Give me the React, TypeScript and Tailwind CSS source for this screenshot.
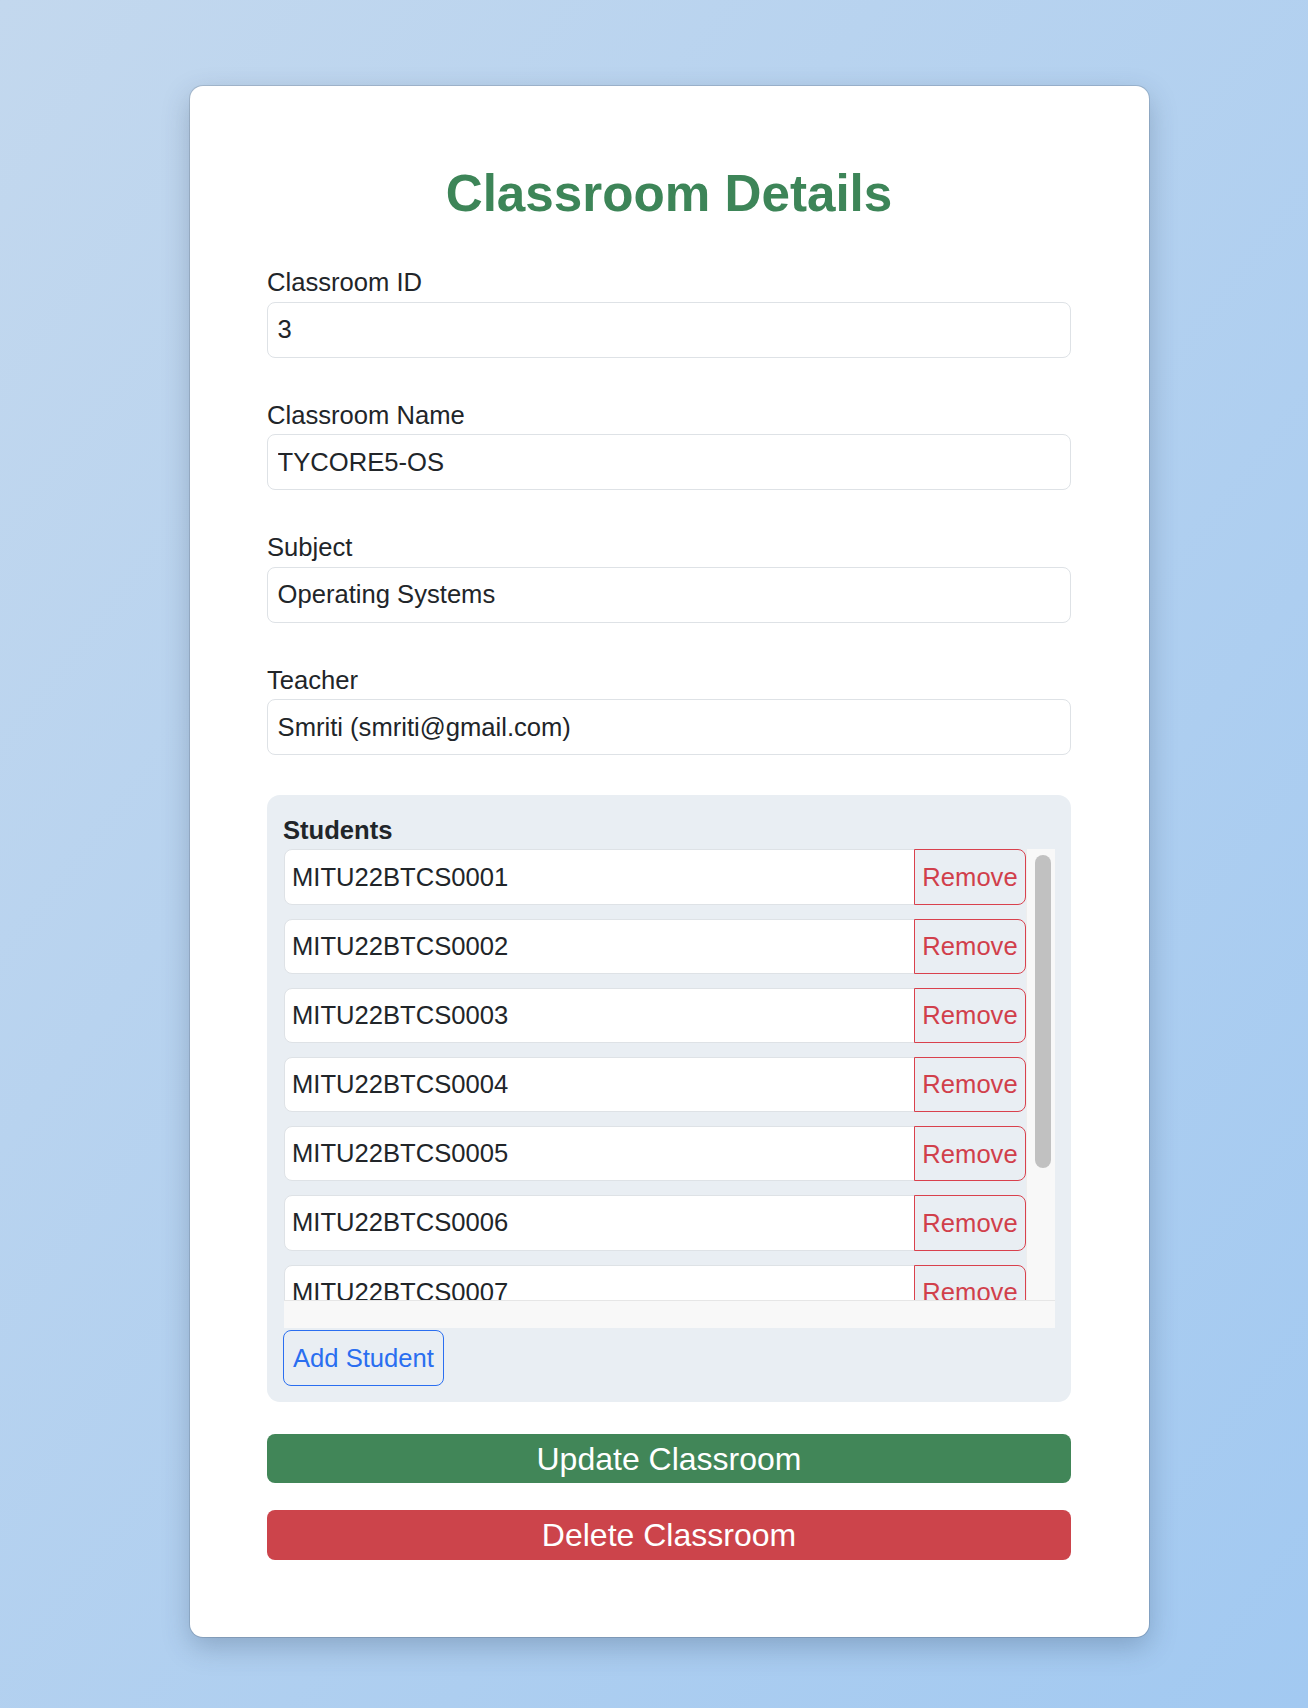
import { Children } from "react";

const fontStack = `font-["Liberation_Sans",Arial,Helvetica,sans-serif]`;
const labelCSS = `block text-[25.6px] leading-[38.4px] text-[#212529]`;
const inputCSS = `w-full h-[56px] px-[9.6px] text-[25.6px] text-[#212529] bg-white border border-[#dee2e6] rounded-[8px] outline-none`;

const students = [
  "MITU22BTCS0001",
  "MITU22BTCS0002",
  "MITU22BTCS0003",
  "MITU22BTCS0004",
  "MITU22BTCS0005",
  "MITU22BTCS0006",
  "MITU22BTCS0007",
  "MITU22BTCS0008",
  "MITU22BTCS0009",
];

const Field = ({ label, value }: { label: string; value: string }) => {
  return (
    <div className="flex flex-col">
      <label className={labelCSS}>{label}</label>
      <input className={inputCSS} defaultValue={value} />
    </div>
  );
};

const StudentRow = ({ id }: { id: string }) => {
  return (
    <div className="flex flex-row shrink-0 h-[55.2px] mb-[14px]">
      <input
        className="flex-1 min-w-0 h-full pl-[7px] text-[25.6px] text-[#212529] bg-white border border-[#dee2e6] rounded-l-[8px] outline-none"
        defaultValue={id}
      />
      <button
        type="button"
        className="w-[112px] -ml-px h-full text-[25.6px] text-[#d13f4b] border border-[#d9414d] rounded-r-[8px] bg-transparent"
      >
        Remove
      </button>
    </div>
  );
};

// list with its scroll tracks (native scrollbars are not painted here)
const StudentList = () => {
  return (
    <div className="flex flex-col h-[479px] ml-px">
      <div className="flex flex-row h-[451px]">
        <div className="flex-1 min-w-0 flex flex-col overflow-hidden">
          {Children.toArray(students.map((s) => <StudentRow id={s} />))}
        </div>
        <div className="w-[29px] shrink-0 bg-[#f8f8f8] border-l border-[#eeeeee] pt-[6px] pl-[8px]">
          <div className="w-[16px] h-[313px] rounded-full bg-[#c1c1c1]" />
        </div>
      </div>
      <div className="h-[28px] bg-[#f8f8f8] border-t border-[#e6e6e6]" />
    </div>
  );
};

export default function App() {
  return (
    <div
      className={`min-h-[1708px] w-full bg-gradient-to-br from-[#c3d8ee] to-[#a2c9f1] pl-[190px] pt-[86px] pb-[70px] ${fontStack}`}
    >
      <div className="w-[959px] bg-white rounded-[13px] p-[77px] pr-[78px] shadow-[0_0_0_1px_rgba(0,0,0,0.12),0_10px_28px_rgba(40,60,90,0.28)]">
        <h1 className="text-center text-[51.2px] leading-[61.4px] font-bold text-[#3d8558]">
          Classroom Details
        </h1>

        <div className="flex flex-col gap-y-[38px] mt-[39px]">
          <Field label="Classroom ID" value="3" />
          <Field label="Classroom Name" value="TYCORE5-OS" />
          <Field label="Subject" value="Operating Systems" />
          <Field label="Teacher" value="Smriti (smriti@gmail.com)" />
        </div>

        <div className="mt-[40px] bg-[#e9eef3] rounded-[13px] p-[16px]">
          <div className="text-[25.6px] leading-[38.4px] font-bold text-[#212529]">
            Students
          </div>
          <StudentList />
          <button
            type="button"
            className="mt-[2px] h-[56px] px-[9px] text-[25.6px] text-[#2a6ef0] border border-[#2a6ef0] rounded-[8px] bg-transparent"
          >
            Add Student
          </button>
        </div>

        <button
          type="button"
          className="mt-[32px] w-full h-[49px] flex items-center justify-center text-[32px] text-white bg-[#418658] rounded-[8px]"
        >
          Update Classroom
        </button>
        <button
          type="button"
          className="mt-[27px] w-full h-[50px] flex items-center justify-center text-[32px] text-white bg-[#cc444b] rounded-[8px]"
        >
          Delete Classroom
        </button>
      </div>
    </div>
  );
}
